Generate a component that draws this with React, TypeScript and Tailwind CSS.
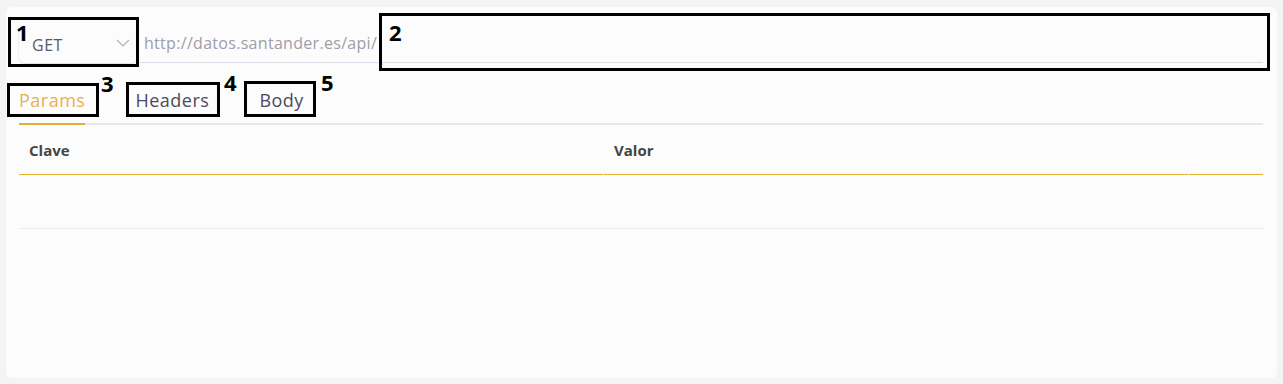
import { useState } from "react";

const tabs = ["Params", "Headers", "Body"];

const Mark = ({ n, box, num }: { n: string; box: string; num: string }) => (
  <>
    <div className={`absolute border-[3px] border-black ${box}`} />
    <span className={`absolute text-[22px] leading-none font-bold text-black ${num}`}>{n}</span>
  </>
);

const App = () => {
  const [tab, setTab] = useState("Params");

  return (
    <div
      className="relative min-h-[384px] w-full bg-[#f4f4f4] px-[6px] pt-[7px] pb-[6px]"
      style={{ fontFamily: '"Open Sans", "Noto Sans", sans-serif' }}
    >
      <div className="h-[371px] rounded-[6px] bg-[#fcfcfc] pl-[13px] pr-[14px] pt-[16px]">
        {/* method + url */}
        <div className="flex h-[40px] items-stretch">
          <div className="flex w-[118px] items-center justify-between rounded-[6px] pl-[13px] pr-[7px] pt-[4px] shadow-[0_1px_1px_rgba(0,0,0,0.10),-1px_0_1px_rgba(0,0,0,0.04)]">
            <span className="text-[16px] tracking-[0.5px] text-[#5b5868]">GET</span>
            <svg width="14" height="8" viewBox="0 0 14 8" fill="none" className="-mt-[5px]">
              <polyline points="1,1 7,7 13,1" stroke="#b3b2bb" strokeWidth="1.2" />
            </svg>
          </div>
          <div className="ml-[3px] flex flex-1 items-center border-b border-[#dcdce6] pl-[4px]">
            <span className="text-[16px] tracking-[0.3px] text-[#9e9dab]">http://datos.santander.es/api/</span>
          </div>
        </div>

        {/* tabs */}
        <div className="mt-[25px] flex gap-[50px] border-b-2 border-[#e6e8ec]">
          {tabs.map((t) => (
            <button
              key={t}
              onClick={() => setTab(t)}
              className={`-mb-[2px] border-b-2 pb-[11px] text-[18px] leading-[24px] tracking-[0.5px] ${
                tab === t ? "border-[#e8ad33] text-[#eab04f]" : "border-transparent text-[#4d4a5c]"
              }`}
            >
              {t}
            </button>
          ))}
        </div>

        {/* table */}
        <div className="flex h-[50px] text-[15px] font-bold text-[#454545]">
          <div className="mr-px flex w-[584px] items-center border-b border-[#e9b22e] pl-[10px] pt-[2px]">Clave</div>
          <div className="mr-px flex w-[584px] items-center border-b border-[#e9b22e] pl-[10px] pt-[2px]">Valor</div>
          <div className="flex-1 border-b border-[#e9b22e]" />
        </div>
        <div className="flex h-[54px]">
          <div className="mr-px w-[584px] border-b border-[#ececec]" />
          <div className="mr-px w-[584px] border-b border-[#ececec]" />
          <div className="flex-1 border-b border-[#ececec]" />
        </div>
      </div>

      {/* annotations */}
      <Mark n="1" box="left-[8px] top-[17px] w-[131px] h-[50px]" num="left-[16px] top-[21px]" />
      <Mark n="2" box="left-[379px] top-[13px] w-[891px] h-[58px]" num="left-[389px] top-[21px]" />
      <Mark n="3" box="left-[7px] top-[83px] w-[92px] h-[34px]" num="left-[101px] top-[72px]" />
      <Mark n="4" box="left-[126px] top-[82px] w-[94px] h-[35px]" num="left-[224px] top-[71px]" />
      <Mark n="5" box="left-[244px] top-[81px] w-[72px] h-[36px]" num="left-[321px] top-[71px]" />
    </div>
  );
};

export default App;
